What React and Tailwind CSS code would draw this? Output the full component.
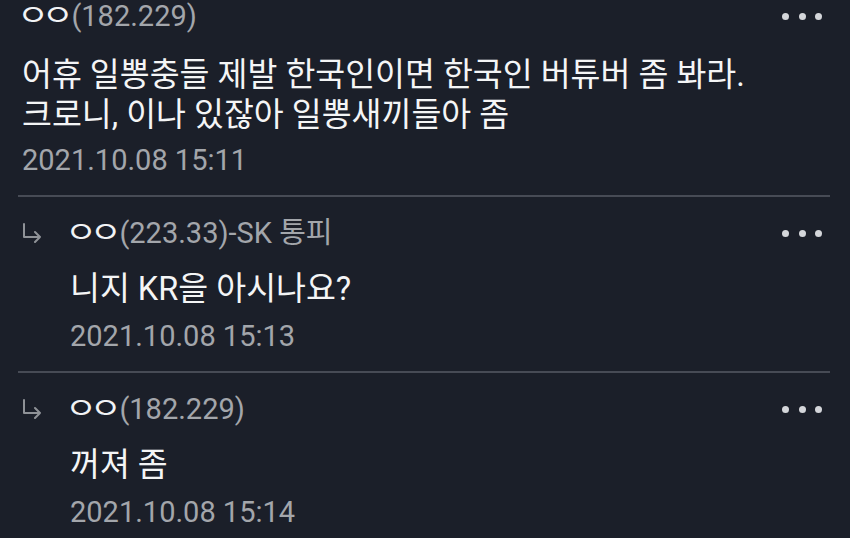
import React from "react";

const comments = [
  {
    reply: false,
    ip: "(182.229)",
    lines: ["어휴 일뽕충들 제발 한국인이면 한국인 버튜버 좀 봐라.", "크로니, 이나 있잖아 일뽕새끼들아 좀"],
    date: "2021.10.08 15:11",
  },
  {
    reply: true,
    ip: "(223.33)-SK 통피",
    lines: ["니지 KR을 아시나요?"],
    date: "2021.10.08 15:13",
  },
  {
    reply: true,
    ip: "(182.229)",
    lines: ["꺼져 좀"],
    date: "2021.10.08 15:14",
  },
];

const Dots = () => (
  <div className="flex items-center gap-[9.5px]">
    <span className="w-[7px] h-[7px] rounded-full bg-[#d4d6da]" />
    <span className="w-[7px] h-[7px] rounded-full bg-[#d4d6da]" />
    <span className="w-[7px] h-[7px] rounded-full bg-[#d4d6da]" />
  </div>
);

const ReplyArrow = () => (
  <svg width="48" height="20" viewBox="0 0 48 20" className="shrink-0">
    <path
      d="M3 1V14H19M14 9L19 14L14 19"
      fill="none"
      stroke="#8f9297"
      strokeWidth="2"
      strokeLinecap="round"
      strokeLinejoin="round"
    />
  </svg>
);

// 닉네임 ㅇㅇ: 가로로 넓은 원 모양이라 scale-x로 늘림
const Nick = () => (
  <span className="inline-block origin-left scale-x-[1.2] ml-[-4px] mr-[13px] text-[29px] leading-[32px] tracking-[-6px] text-[#f2f3f5]">
    ㅇㅇ
  </span>
);

const Comment = ({ c }) => {
  const left = c.reply ? "pl-[70px]" : "pl-[22px]";
  return (
    <div className={c.reply ? "pt-[20px] pb-[19px]" : "pb-[19px]"}>
      <div className="flex items-center justify-between h-[32px] pr-[28px]">
        <div className="flex items-center pl-[21px]">
          {c.reply && <ReplyArrow />}
          <Nick />
          <span className="text-[29px] leading-[32px] text-[#a3a6ab]">{c.ip}</span>
        </div>
        <Dots />
      </div>
      <div className={`${left} ${c.reply ? "mt-[20px]" : "mt-[23px]"} text-[32.5px] leading-[40px] text-[#f4f5f6]`}>
        {c.lines.map((l) => (
          <div key={l}>{l}</div>
        ))}
      </div>
      <div className={`${left} ${c.reply ? "mt-[11px]" : "mt-[9px]"} text-[29px] leading-[32px] text-[#a3a6ab]`}>
        {c.date}
      </div>
    </div>
  );
};

export default function App() {
  return (
    <div className="w-[850px] h-[538px] overflow-hidden bg-[#1b1f29] font-['Roboto','Noto_Sans_CJK_KR',sans-serif]">
      {comments.map((c, i) => (
        <div key={i}>
          {i > 0 && <div className="ml-[18px] mr-[20px] h-[2px] bg-[#474b55]" />}
          <Comment c={c} />
        </div>
      ))}
    </div>
  );
}
